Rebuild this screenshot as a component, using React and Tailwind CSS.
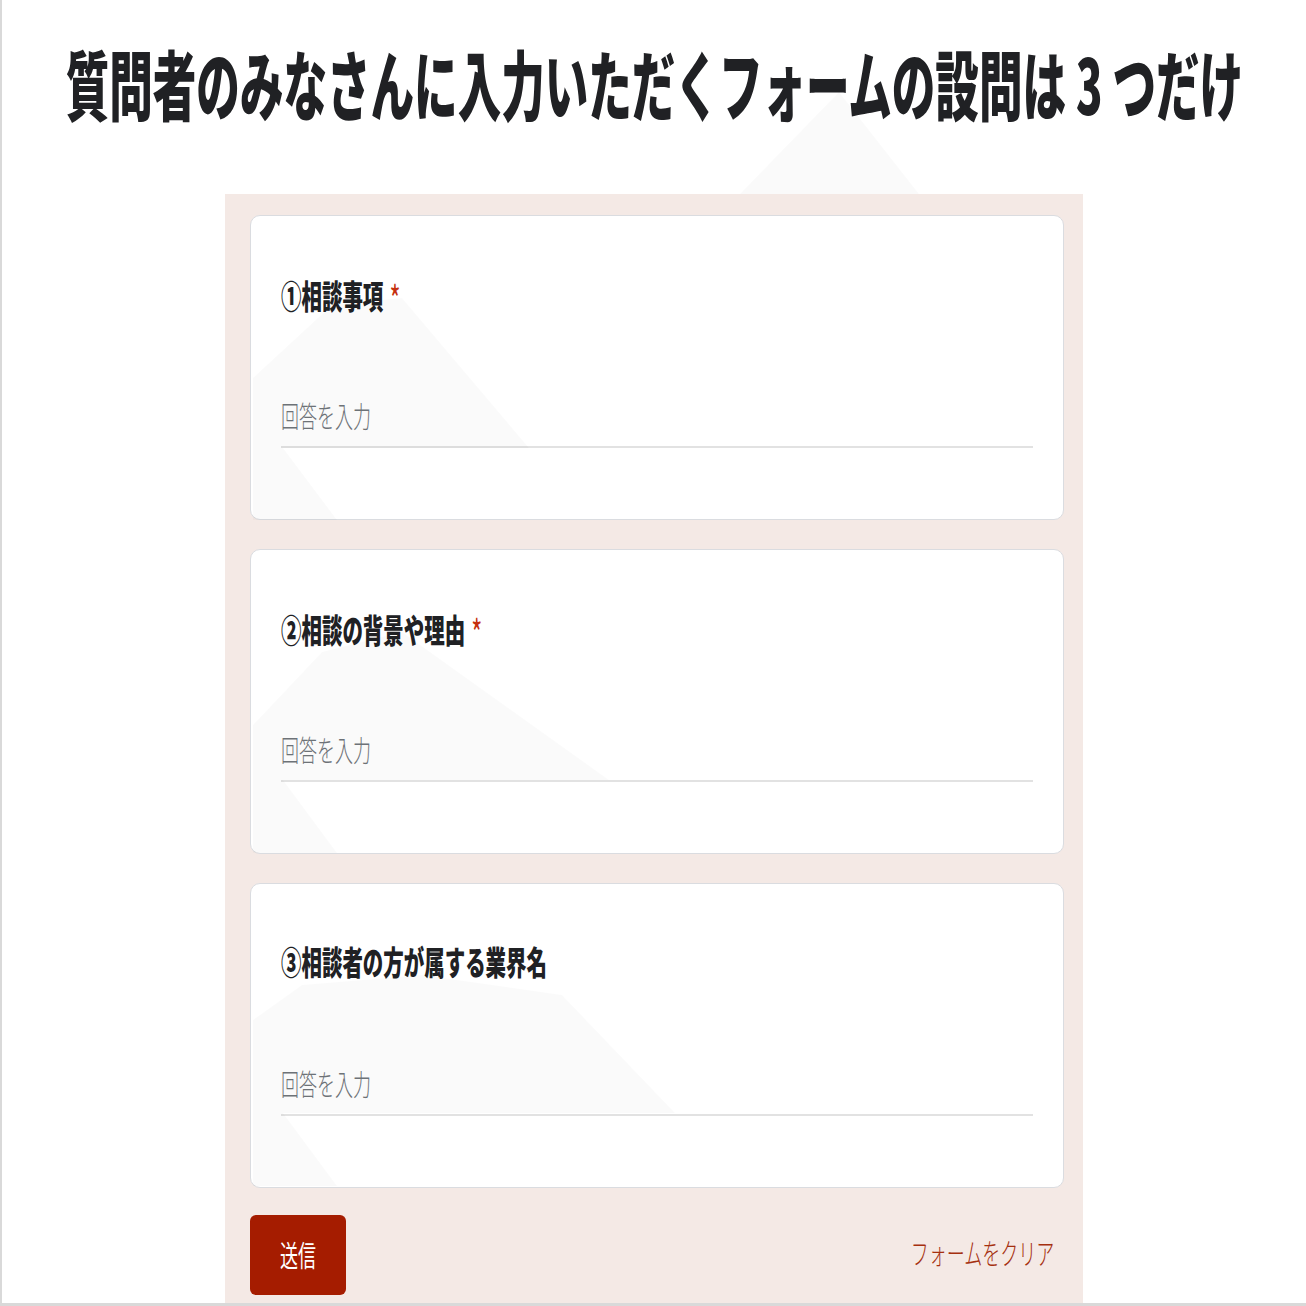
import React from "react";

const JP = "font-['Noto_Sans_CJK_JP','Noto_Sans',sans-serif]";

const questions = [
  { label: "①相談事項", required: true },
  { label: "②相談の背景や理由", required: true },
  { label: "③相談者の方が属する業界名", required: false },
];

// faint mountain watermark
const Watermark = () => (
  <svg
    className="absolute inset-0 pointer-events-none"
    width="1306"
    height="1306"
    viewBox="0 0 1306 1306"
  >
    <g fill="#000" fillOpacity="0.02">
      <polygon points="738,194 837,92 917,194" />
      <polygon points="251,378 330,305 400,298 527,448 281,448 335,520 251,520" />
      <polygon points="251,725 320,652 400,632 607,780 281,780 335,853 251,853" />
      <polygon points="251,1020 300,985 420,975 560,995 673,1113 281,1113 335,1186 251,1186" />
    </g>
  </svg>
);

const QuestionCard = ({ label, required }) => (
  <div className="h-[305px] rounded-[10px] border border-[#dadce0] bg-white px-[30px] pt-[57px]">
    <div className="h-[40px] leading-[40px] whitespace-nowrap">
      <span className="inline-block origin-left scale-x-[0.62] text-[33px] font-black text-[#202124]">
        {label}
        {required && (
          <span className="ml-[10px] inline-block translate-y-[5px] text-[38px] font-normal text-[#c5300f]">
            *
          </span>
        )}
      </span>
    </div>
    <div className="mt-[82px] border-b-2 border-[#e2e2e2] pb-[11px]">
      <div className="h-[40px] leading-[40px] whitespace-nowrap">
        <span className="inline-block origin-left scale-x-[0.62] text-[29px] font-light text-[#70757a]">
          回答を入力
        </span>
      </div>
    </div>
  </div>
);

const App = () => {
  return (
    <div
      className={`relative flex h-[1306px] w-[1306px] flex-col overflow-hidden border-b-[3px] border-l-2 border-[#d9d9d9] bg-white ${JP}`}
    >
      <div className="flex h-[194px] shrink-0 items-start justify-center overflow-hidden pt-[38px]">
        <h1 className="inline-block origin-center scale-x-[0.573] whitespace-nowrap text-[76px] font-black leading-[88px] text-[#202124]">
          質問者のみなさんに入力いただくフォームの設問は 3 つだけ
        </h1>
      </div>

      <div className="ml-[223px] flex w-[858px] flex-1 flex-col bg-[#f4e9e5] pl-[25px] pr-[19px] pt-[21px]">
        <div className="flex flex-col gap-[29px]">
          {questions.map((q) => (
            <QuestionCard key={q.label} {...q} />
          ))}
        </div>

        <div className="mt-[27px] flex items-start justify-between pr-[10px]">
          <button className="flex h-[80px] w-[96px] items-center justify-center rounded-[6px] bg-[#a51c00]">
            <span className="inline-block scale-x-[0.62] text-[29px] font-normal text-white">
              送信
            </span>
          </button>
          <div className="flex h-[80px] items-center whitespace-nowrap pb-[4px]">
            <span className="inline-block origin-right scale-x-[0.62] text-[29px] font-light text-[#a5300f]">
              フォームをクリア
            </span>
          </div>
        </div>
      </div>

      <Watermark />
    </div>
  );
};

export default App;
